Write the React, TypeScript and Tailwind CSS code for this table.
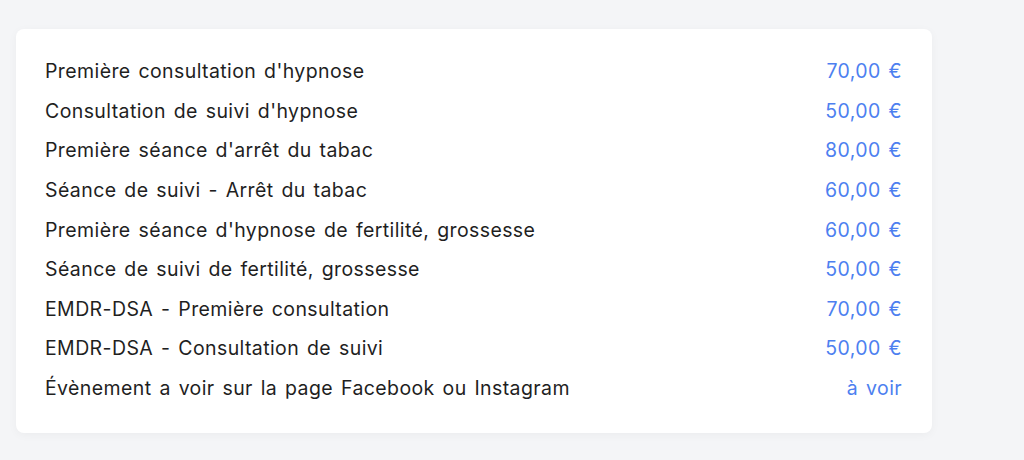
const TARIFS = [
  { label: "Première consultation d'hypnose", price: "70,00 €" },
  { label: "Consultation de suivi d'hypnose", price: "50,00 €" },
  { label: "Première séance d'arrêt du tabac", price: "80,00 €" },
  { label: "Séance de suivi - Arrêt du tabac", price: "60,00 €" },
  { label: "Première séance d'hypnose de fertilité, grossesse", price: "60,00 €" },
  { label: "Séance de suivi de fertilité, grossesse", price: "50,00 €" },
  { label: "EMDR-DSA - Première consultation", price: "70,00 €" },
  { label: "EMDR-DSA - Consultation de suivi", price: "50,00 €" },
  { label: "Évènement a voir sur la page Facebook ou Instagram", price: "à voir" },
];

export default function App() {
  return (
    <div className="min-h-[460px] bg-[#f4f5f7] pl-4 pt-[29px] font-['Inter',sans-serif]">
      <div className="w-[916px] rounded-lg bg-white pl-[29px] pr-[30px] pt-[23px] pb-[25px] shadow-[0_2px_10px_rgba(0,0,0,0.04)]">
        {TARIFS.map((t) => (
          <div
            key={t.label}
            className="flex h-[39.6px] items-center justify-between text-[19.5px] tracking-[0.4px] [word-spacing:2px] text-[#1f1f1f]">
            <span>{t.label}</span>
            <span className="text-[#4d7ff0]">{t.price}</span>
          </div>
        ))}
      </div>
    </div>
  );
}
